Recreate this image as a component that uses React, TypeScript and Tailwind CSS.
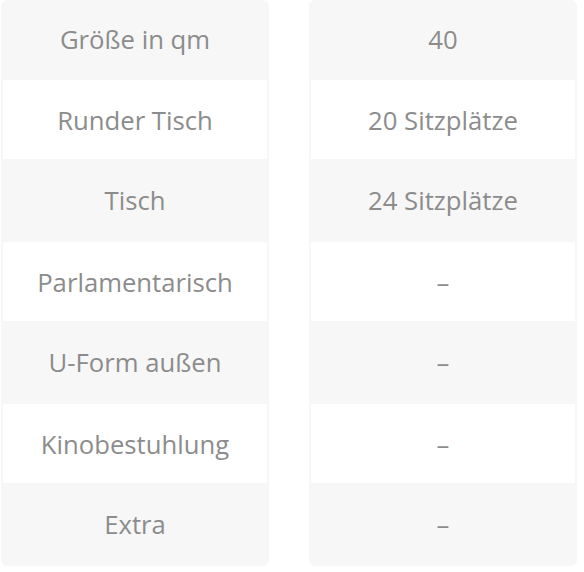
import React from "react";

const left = ["Größe in qm", "Runder Tisch", "Tisch", "Parlamentarisch", "U-Form außen", "Kinobestuhlung", "Extra"];
const right = ["40", "20 Sitzplätze", "24 Sitzplätze", "–", "–", "–", "–"];

function Column({ items }: { items: string[] }) {
  return (
    <div className="flex flex-col rounded-[6px] bg-[#f7f7f7] w-[268px]">
      {items.map((t, i) => {
        const white = i % 2 === 1;
        const h = i === 0 ? "h-[80px]" : white ? "h-[79px] pt-[3px]" : "h-[83px] pt-[2px]";
        return (
          <div
            key={i}
            className={`${h} flex items-center justify-center ${white ? "bg-white mx-[2px]" : ""}`}
          >
            <span className="text-[25.7px] text-[#8c8c8c]">{t}</span>
          </div>
        );
      })}
    </div>
  );
}

export default function App() {
  return (
    <div
      className="w-[584px] h-[572px] bg-white flex items-start gap-[40px] pl-[1px]"
      style={{ fontFamily: '"Open Sans", sans-serif' }}
    >
      <Column items={left} />
      <Column items={right} />
    </div>
  );
}
